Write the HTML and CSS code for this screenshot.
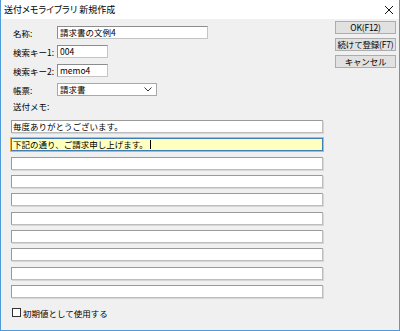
FILE: index.html
```html
<!DOCTYPE html>
<html lang="ja">
<head>
<meta charset="utf-8">
<link rel="stylesheet" href="styles.css">
</head>
<body>
<div class="window">
  <div class="titlebar">
    <span class="title">送付メモライブラリ 新規作成</span>
    <svg class="close" width="10" height="10" viewBox="0 0 10 10"><path d="M1 1 L9 9 M9 1 L1 9" stroke="#111" stroke-width="1" fill="none"/></svg>
  </div>
  <div class="body">
    <div class="form">
      <div class="field-row first">
        <span class="label">名称:</span>
        <div class="input wide">請求書の文例4</div>
      </div>
      <div class="field-row">
        <span class="label">検索キー1:</span>
        <div class="input narrow">004</div>
      </div>
      <div class="field-row">
        <span class="label">検索キー2:</span>
        <div class="input narrow">memo4</div>
      </div>
      <div class="field-row">
        <span class="label">帳票:</span>
        <div class="input select">
          <span>請求書</span>
          <svg class="chev" width="8" height="5" viewBox="0 0 8 5"><path d="M0.5 0.5 L4 4 L7.5 0.5" stroke="#333" stroke-width="1" fill="none"/></svg>
        </div>
      </div>
      <div class="memo-label">送付メモ:</div>
      <div class="memo-list">
        <div class="memo">毎度ありがとうございます。</div>
        <div class="memo active">下記の通り、ご請求申し上げます。<span class="caret"></span></div>
        <div class="memo"></div>
        <div class="memo"></div>
        <div class="memo"></div>
        <div class="memo"></div>
        <div class="memo"></div>
        <div class="memo"></div>
        <div class="memo"></div>
        <div class="memo"></div>
      </div>
      <label class="check-row">
        <span class="checkbox"></span>
        <span>初期値として使用する</span>
      </label>
    </div>
    <div class="buttons">
      <div class="btn">OK(F12)</div>
      <div class="btn">続けて登録(F7)</div>
      <div class="btn">キャンセル</div>
    </div>
  </div>
</div>
</body>
</html>
```

FILE: styles.css
```css
html, body {
  margin: 0;
  padding: 0;
}
body {
  font-family: "Noto Sans CJK JP", "Noto Sans", sans-serif;
  font-size: 8.5px;
  color: #000;
}
.window {
  width: 400px;
  height: 331px;
  box-sizing: border-box;
  border: 1px solid #4f9ad9;
  border-top: none;
  display: flex;
  flex-direction: column;
  background: #f0f0f0;
}
.titlebar {
  height: 19px;
  background: #fff;
  display: flex;
  align-items: center;
  justify-content: space-between;
  padding: 0 5px 0 3px;
  flex: none;
}
.title {
  font-size: 9px;
  font-feature-settings: "palt";
  line-height: 19px;
}
.close {
  display: block;
  margin-top: 1px;
}
.body {
  flex: 1;
  display: flex;
  padding-left: 10px;
}
.form {
  width: 312px;
  padding-top: 7px;
  display: flex;
  flex-direction: column;
}
.field-row {
  display: flex;
  align-items: center;
  height: 13px;
  margin-top: 6px;
}
.field-row.first {
  margin-top: 0;
}
.label {
  width: 44px;
  padding-left: 2px;
  line-height: 13px;
  margin-top: 2px;
  white-space: nowrap;
}
.input {
  box-sizing: border-box;
  height: 13px;
  background: #fff;
  border: 1px solid #8c8c8c;
  border-right-color: #c4c4c4;
  border-bottom-color: #c4c4c4;
  line-height: 11px;
  padding-left: 2px;
  white-space: nowrap;
  overflow: hidden;
}
.wide {
  width: 151px;
}
.narrow {
  width: 51px;
}
.select {
  width: 100px;
  border: 1px solid #a8a8a8;
  display: flex;
  align-items: center;
  justify-content: space-between;
  padding-right: 4px;
}
.chev {
  display: block;
}
.memo-label {
  margin-top: 4px;
  padding-left: 2px;
  height: 12px;
  line-height: 12px;
}
.memo-list {
  margin-top: 8px;
  display: flex;
  flex-direction: column;
  gap: 5.333px;
}
.memo {
  box-sizing: border-box;
  height: 13px;
  background: #fff;
  border: 1px solid #9a9a9a;
  border-right-color: #bdbdbd;
  border-bottom-color: #bdbdbd;
  box-shadow: 1px 1px 0 #d6d6d6;
  line-height: 11px;
  padding-left: 1px;
  white-space: nowrap;
  overflow: hidden;
}
.memo.active {
  background: #ffffc0;
  border: 1px solid #3d7fb3;
  box-shadow: 0 0 0 1px #f3b03a;
}
.caret {
  display: inline-block;
  width: 1px;
  height: 9px;
  background: #000;
  vertical-align: -1px;
  margin-left: 2px;
}
.check-row {
  display: flex;
  align-items: center;
  margin-top: 10px;
  padding-left: 1px;
  height: 10px;
  gap: 2px;
}
.checkbox {
  box-sizing: border-box;
  width: 9px;
  height: 9px;
  border: 1px solid #333;
  background: #fff;
}
.buttons {
  margin-left: 12px;
  padding-top: 2px;
  display: flex;
  flex-direction: column;
  gap: 4px;
}
.btn {
  box-sizing: border-box;
  width: 61px;
  height: 13px;
  background: #e1e1e1;
  border: 1px solid #adadad;
  display: flex;
  align-items: center;
  justify-content: center;
  line-height: 11px;
  white-space: nowrap;
  letter-spacing: -0.2px;
}
```
